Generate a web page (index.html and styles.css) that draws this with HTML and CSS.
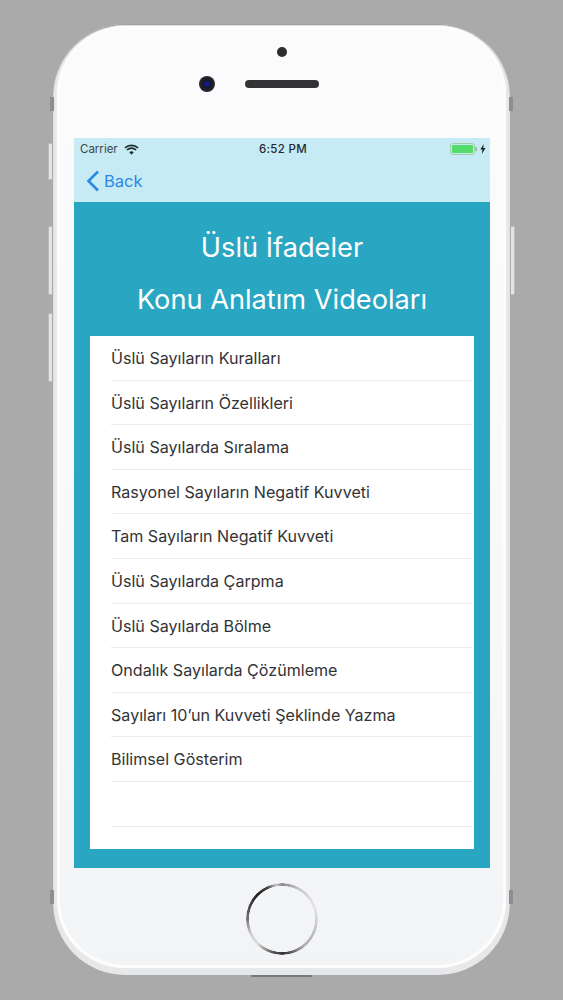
FILE: index.html
```html
<!DOCTYPE html>
<html lang="tr">
<head>
<meta charset="utf-8">
<title>Üslü İfadeler</title>
<link rel="stylesheet" href="styles.css">
</head>
<body>
<div class="phone">
  <span class="btn mute"></span><span class="btn vol1"></span><span class="btn vol2"></span><span class="btn power"></span>
  <span class="band b-tl"></span><span class="band b-tr"></span><span class="band b-bl"></span><span class="band b-br"></span>
  <span class="port"></span>
  <div class="face">
    <div class="bezel-top">
      <span class="sensor"></span>
      <span class="camera"></span>
      <span class="speaker"></span>
    </div>
    <div class="screen">
      <div class="chrome">
        <div class="status">
          <div class="status-left">
            <span>Carrier</span>
            <svg class="wifi" width="15" height="11" viewBox="0 0 15 11"><path d="M7.5 10.8 5.3 8.3a3.2 3.2 0 0 1 4.4 0z" fill="#1d2a30"/><path d="M1 3.9a9.4 9.4 0 0 1 13 0M3 6a6.4 6.4 0 0 1 9 0" fill="none" stroke="#1d2a30" stroke-width="1.7"/></svg>
          </div>
          <span class="clock">6:52 PM</span>
          <div class="status-right">
            <span class="battery"><span class="charge"></span></span>
            <span class="nub"></span>
            <svg class="bolt" width="6" height="10" viewBox="0 0 6 10"><path d="M3.6 0 .4 5.6h2L1.9 10l3.6-6H3.3z" fill="#1a2226"/></svg>
          </div>
        </div>
        <div class="nav">
          <svg class="chev" width="14" height="22" viewBox="0 0 14 22"><path d="M12 1.5 2.5 11l9.5 9.5" fill="none" stroke="#2b88e6" stroke-width="2.6"/></svg>
          <span>Back</span>
        </div>
      </div>
      <div class="content">
        <h1>Üslü İfadeler</h1>
        <h2>Konu Anlatım Videoları</h2>
        <ul class="list">
          <li>Üslü Sayıların Kuralları</li>
          <li>Üslü Sayıların Özellikleri</li>
          <li>Üslü Sayılarda Sıralama</li>
          <li>Rasyonel Sayıların Negatif Kuvveti</li>
          <li>Tam Sayıların Negatif Kuvveti</li>
          <li>Üslü Sayılarda Çarpma</li>
          <li>Üslü Sayılarda Bölme</li>
          <li>Ondalık Sayılarda Çözümleme</li>
          <li>Sayıları 10’un Kuvveti Şeklinde Yazma</li>
          <li>Bilimsel Gösterim</li>
          <li class="empty"></li>
        </ul>
      </div>
    </div>
    <div class="bezel-bottom"><span class="home"></span></div>
  </div>
</div>
</body>
</html>
```
FILE: styles.css
```css
* { box-sizing: border-box; }
html, body { margin: 0; height: 100%; }
body {
  width: 563px;
  height: 1000px;
  background: #abaaab;
  padding: 24px 53px 0;
  overflow: hidden;
  font-family: Inter, "Noto Sans", sans-serif;
}
.phone {
  position: relative;
  width: 457px;
  height: 951px;
  border-radius: 72px;
  background: #e6e8e9;
  padding: 2px 4px 7px;
  box-shadow: inset 0 1px 1px #9a9a9b;
}
.face {
  height: 100%;
  border-radius: 68px;
  background: linear-gradient(#fbfbfc 0, #f9fafb 40%, #f2f4f6 100%);
  padding: 0 16px 0 17px;
  display: flex;
  flex-direction: column;
  box-shadow: inset 0 0 0 3px #fdfdfd;
}
.bezel-top {
  position: relative;
  height: 112px;
  flex: none;
}
.sensor {
  position: absolute;
  left: 203px; top: 21px;
  width: 10px; height: 10px;
  border-radius: 50%;
  background: #2c2c2e;
}
.camera {
  position: absolute;
  left: 125px; top: 50px;
  width: 16px; height: 16px;
  border-radius: 50%;
  background: radial-gradient(circle, #101a8e 0 2px, #161826 3.5px, #33353a 100%);
}
.speaker {
  position: absolute;
  left: 171px; top: 54px;
  width: 74px; height: 8px;
  border-radius: 4px;
  background: #333335;
}
.screen { flex: none; height: 730px; display: flex; flex-direction: column; }
.chrome { height: 64px; background: #c6ebf4; flex: none; }
.status {
  height: 22px;
  padding: 0 4px 0 6px;
  display: grid;
  grid-template-columns: 1fr auto 1fr;
  align-items: center;
  font-size: 11.5px;
  color: #3b464c;
}
.status-left { display: flex; align-items: center; gap: 6px; }
.clock { font-weight: 500; color: #1f2a30; letter-spacing: .3px; }
.status-right { display: flex; justify-content: flex-end; align-items: center; }
.battery {
  width: 25px; height: 12px;
  border: 1px solid #9ccfa6;
  border-radius: 3px;
  padding: 1px;
  display: flex;
}
.charge { flex: 1; background: #55db6c; border-radius: 1px; }
.nub { width: 2px; height: 4px; background: #9cc4a4; margin-right: 3px; }
.nav {
  height: 42px;
  padding: 0 0 0 12px;
  display: flex;
  align-items: center;
  gap: 4px;
  font-size: 16.5px;
  color: #2b88e6;
}
.content {
  flex: 1;
  background: #29a6c2;
  padding: 0 16px 19px;
  display: flex;
  flex-direction: column;
  color: #fff;
}
h1, h2 { margin: 0; text-align: center; font-weight: 400; font-size: 27.2px; line-height: 52px; }
h1 { margin-top: 20px; }
h2 { margin-bottom: 10px; }
.list {
  list-style: none;
  margin: 0;
  padding: 0 0 0 21px;
  flex: 1;
  background: #fff;
  color: #333336;
  font-size: 16.1px;
}
.list li {
  height: 44.6px;
  line-height: 44px;
  border-bottom: 1px solid #eaeaec;
  margin-right: 2px;
  white-space: nowrap;
}
.bezel-bottom {
  flex: 1;
  display: flex;
  justify-content: center;
  align-items: flex-start;
  padding-top: 15px;
  padding-right: 1px;
}
.home {
  width: 72px; height: 72px;
  border-radius: 50%;
  background: conic-gradient(#8a8a8c, #c8c8ca 30deg, #e6e6e8 70deg, #c0c0c2 110deg, #b0b0b2 140deg, #303032 178deg, #555 195deg, #dcdcde 225deg, #d0d0d2 245deg, #707072 270deg, #222224 315deg, #444 335deg, #c8c8ca 350deg, #8a8a8c);
  -webkit-mask: radial-gradient(circle, transparent 32.8px, #000 33.4px);
  mask: radial-gradient(circle, transparent 32.8px, #000 33.4px);
}
.btn {
  position: absolute;
  left: -5px;
  width: 4px;
  background: #e4e4e5;
  border: 1px solid #bdbdbe;
  border-right: 0;
  border-radius: 2px 0 0 2px;
}
.mute { top: 119px; height: 37px; }
.vol1 { top: 202px; height: 69px; }
.vol2 { top: 289px; height: 69px; }
.power { left: auto; right: -5px; top: 202px; height: 69px; border-right: 1px solid #bdbdbe; border-left: 0; border-radius: 0 2px 2px 0; }
.band { position: absolute; width: 4px; height: 14px; background: #8e8e90; }
.b-tl { left: -3px; top: 73px; }
.b-tr { right: -3px; top: 73px; }
.b-bl { left: -3px; top: 866px; }
.b-br { right: -3px; top: 866px; }
.port {
  position: absolute;
  left: 198px; bottom: -2px;
  width: 61px; height: 2px;
  background: #77777a;
  border-radius: 1px;
}
```
